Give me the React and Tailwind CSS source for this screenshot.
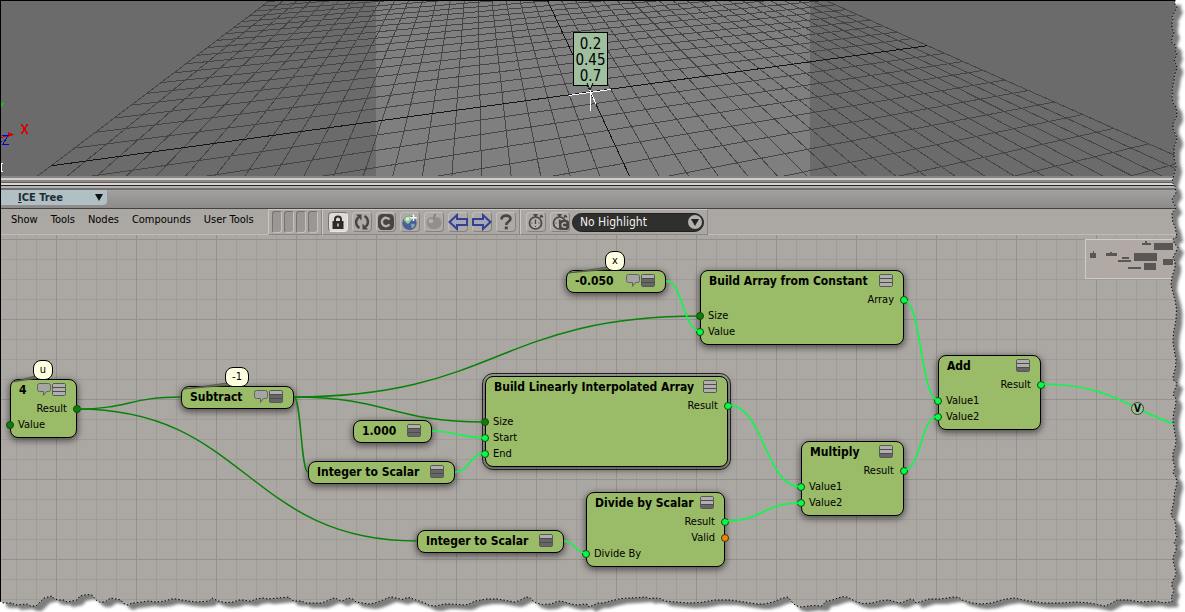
import React from "react";

const DARK = "#078207";
const LIGHT = "#00ff44";
const CANVAS_TOP = 235;

/* ---------- 3D viewport ---------- */

const HORIZON = -155;
const VANISH_Z = 475;
const VANISH_X = 2392;
const BASE = 175;

const zFoot = (u) => 629 + 29.5 * u;
const xFoot = (v) => -16 + 115 * v;

// Where the grid line v (parallel to X) meets the grid line u (parallel to Z).
function cross(u, v) {
  const a = (VANISH_Z - zFoot(u)) / (HORIZON - BASE);
  const b = (VANISH_X - xFoot(v)) / (HORIZON - BASE);
  const t = (xFoot(v) - zFoot(u)) / (a - b);
  return [zFoot(u) + a * t, BASE + t];
}

function Viewport() {
  const steps = Array.from({ length: 41 }, (_, i) => i - 20);
  const zLine = (u) => {
    const a = (VANISH_Z - zFoot(u)) / (HORIZON - BASE);
    return `M${zFoot(u) + a * 2} ${BASE + 2}L${zFoot(u) - a * 175} 0`;
  };
  const xLine = (v) => {
    const l = cross(-20, v);
    const r = cross(20, v);
    return `M${l[0]} ${l[1]}L${r[0]} ${r[1]}`;
  };
  return (
    <section className="relative h-44 shrink-0 overflow-hidden bg-[#6b6b6b]">
      <svg className="absolute inset-0 h-full w-full" shapeRendering="crispEdges" fill="none">
        <rect x="376" y="0" width="434" height="176" fill="#7f7f7f" />
        <g stroke="#454545">
          {steps.filter((s) => s !== 0).map((s) => (
            <path key={s} d={zLine(s) + xLine(s)} />
          ))}
        </g>
        <path d={zLine(0) + xLine(0)} stroke="#141414" />
        <path d="M569 95.500L611 89.500M590.500 92V111M588 86L596 104" stroke="#fff" />
        <path d="M0 138L10 134.500" stroke="#d80000" />
        <path d="M8 132L14 134.500L8 137Z" fill="#d80000" />
        <path d="M21.500 124L27.500 134M27.500 124L21.500 134" stroke="#d80000" strokeWidth="1.700" />
        <path d="M2 135.500H8L2.500 144.500H9M0 141H2" stroke="#0000d8" />
        <path d="M0 108L3 103" stroke="#00d800" strokeWidth="2" />
        <path d="M0 163.500H3M1.500 163V171M0 171.500H3" stroke="#fff" />
      </svg>
      <div className="absolute left-[573px] top-8 flex w-[35px] flex-col items-center border border-black bg-[#9fbf9f] pb-[1px] pt-[3px] text-[15px] leading-4 text-black">
        <span>0.2</span>
        <span>0.45</span>
        <span>0.7</span>
      </div>
      <svg className="absolute left-[586px] top-[83px] h-2 w-2" viewBox="0 0 8 8">
        <path d="M1 0L4 7L7 0" fill="#9fbf9f" stroke="#000" />
      </svg>
    </section>
  );
}

/* ---------- toolbar ---------- */

function Tool({ label, active, children }) {
  return (
    <button
      aria-label={label}
      className={
        active
          ? "flex size-5 items-center justify-center rounded border border-[#77736f] border-r-[#e8e6e4] border-b-[#e8e6e4] bg-[#dedbd9]"
          : "flex size-5 items-center justify-center rounded border border-[#c2bebb] border-r-[#86827f] border-b-[#86827f] bg-[#aeaaa7]"
      }
    >
      <svg viewBox="0 0 18 18" className="size-[18px] shrink-0 overflow-visible" fill="none">
        {children}
      </svg>
    </button>
  );
}

function Stopwatch() {
  return (
    <g stroke="#474441">
      <circle cx="8.500" cy="10" r="6" strokeWidth="1.700" fill="#b3afac" />
      <path d="M6.500 1.800H10.500M8.500 2V4M13 4.500L15 2.500M13.500 2L15.800 4.200" strokeWidth="1.700" />
      <path d="M8.500 6.500V11" strokeWidth="1.300" />
      <path d="M4.500 10H5.500M11.500 10H12.500M8.500 13V14" />
    </g>
  );
}

function Toolbar() {
  const group =
    "flex h-[26px] items-center border border-[#8b8784] border-l-[#cac7c4] border-t-[#cac7c4]";
  return (
    <div className="flex">
      <div className={group + " w-[54px] gap-[2px] px-[3px]"}>
        {[0, 1, 2, 3].map((i) => (
          <span
            key={i}
            className="h-[22px] w-[10px] rounded-[3px] border border-[#75726f] border-b-[#c4c1be] border-r-[#c4c1be] bg-[#9b9794]"
          />
        ))}
      </div>
      <div className={group + " w-[198px] gap-1 pl-[5px]"}>
        <Tool label="Lock" active>
          <path d="M6 9V6.500A3 3 0 0 1 12 6.500V9" stroke="#2e2a28" strokeWidth="2" />
          <rect x="3.500" y="8" width="11" height="8" fill="#2e2a28" />
          <path d="M9 10.500V13.500" stroke="#dedbd9" strokeWidth="1.500" />
        </Tool>
        <Tool label="Refresh">
          <path d="M6.500 15A6.500 6.500 0 0 1 5.500 4.200" stroke="#474441" strokeWidth="2.400" />
          <path d="M3 1.500H8.500V7.500Z" fill="#474441" />
          <path d="M11.500 3A6.500 6.500 0 0 1 12.500 13.800" stroke="#474441" strokeWidth="2.400" />
          <path d="M15 16.500H9.500V10.500Z" fill="#474441" />
        </Tool>
        <Tool label="Compile">
          <rect x="1" y="1" width="16" height="16" rx="4.500" fill="#474441" />
          <path d="M12.500 6.600A4.200 4.200 0 1 0 12.500 11.400" stroke="#b5b1ae" strokeWidth="2.400" />
        </Tool>
        <Tool label="New world">
          <circle cx="8.500" cy="10" r="7.200" fill="#4c5e9c" />
          <path d="M3 6Q5 2.500 9 3Q12 4 11 7Q9 8 8.500 10Q6 12 4.500 9Q2.500 8 3 6Z" fill="#92c792" />
          <path d="M10 11Q13 10 14 12Q13 15 10.500 15Z" fill="#7cae96" />
          <circle cx="6.500" cy="6" r="2" fill="#d4edd4" />
          <path d="M12.500 1.500V8M9.300 4.700H15.700" stroke="#fff" strokeWidth="1.500" />
        </Tool>
        <Tool label="Apple">
          <path d="M9 5C5 3 1.500 5.500 1.500 9.500C1.500 13.500 5 16.500 9 16C13 16.500 16.500 13.500 16.500 9.500C16.500 5.500 13 3 9 5Z" fill="#92908e" />
          <ellipse cx="6" cy="8" rx="2.500" ry="2" fill="#b4b1ae" />
          <path d="M9 6Q8.500 3 10.500 1" stroke="#777472" strokeWidth="1.300" />
        </Tool>
        <Tool label="Back">
          <path d="M0.500 9L8 2V6H18V12H8V16Z" stroke="#334190" strokeWidth="2" fill="#a5a8bb" />
        </Tool>
        <Tool label="Forward">
          <path d="M17.500 9L10 2V6H0V12H10V16Z" stroke="#334190" strokeWidth="2" fill="#a5a8bb" />
        </Tool>
        <Tool label="Help">
          <path d="M4.500 6.500C4.500 1.500 13.500 1.500 13.500 5.800C13.500 8.500 9.300 8.500 9.300 12" stroke="#474441" strokeWidth="2.600" />
          <rect x="7.800" y="13.500" width="3" height="2.800" fill="#474441" />
        </Tool>
      </div>
      <div className={group + " w-[188px] gap-1 pl-[5px] pr-[3px]"}>
        <Tool label="Timer">
          <Stopwatch />
        </Tool>
        <Tool label="Compiled timer">
          <Stopwatch />
          <rect x="8" y="7" width="10" height="10" rx="3" fill="#474441" />
          <path d="M15 10.600A2.200 2.200 0 1 0 15 13.400" stroke="#b5b1ae" strokeWidth="1.500" />
        </Tool>
        <label className="relative -ml-[2px] block flex-1">
          <select
            aria-label="Highlight"
            className="block h-[19px] w-full appearance-none rounded-full border border-[#1f1f1f] bg-[#2f2f2e] pl-[7px] pr-5 text-xs leading-4 text-[#f0f0f0]"
          >
            <option>No Highlight</option>
          </select>
          <svg viewBox="0 0 16 16" className="pointer-events-none absolute right-[1px] top-[1px] size-4">
            <circle cx="8" cy="8" r="7" fill="#b4b1af" />
            <path d="M4 5H12L8 12Z" fill="#222" />
          </svg>
        </label>
      </div>
    </div>
  );
}

/* ---------- node graph ---------- */

// shade: how many of the three bands, from the bottom, are dark
function BandIcon({ shade }) {
  const fills = [0, 1, 2].map((i) => (i >= 3 - shade ? "#666666" : "#b0afae"));
  return (
    <svg viewBox="0 0 14 13" className="h-[13px] w-[14px] shrink-0">
      <rect x="0.500" y="0.500" width="13" height="12" rx="1.500" fill={fills[1]} stroke="#585858" />
      <rect x="1" y="1" width="12" height="3" fill={fills[0]} />
      <rect x="1" y="9" width="12" height="3" fill={fills[2]} />
      <path d="M1 4.500H13M1 8.500H13" stroke="#4c4c4c" />
    </svg>
  );
}

function SpeechIcon() {
  return (
    <svg viewBox="0 0 14 13" className="h-[13px] w-[14px] shrink-0">
      <path
        d="M2.500 0.500H11.500Q13.500 0.500 13.500 2.500V6.500Q13.500 8.500 11.500 8.500H9.500L6.500 12.300V8.500H2.500Q0.500 8.500 0.500 6.500V2.500Q0.500 0.500 2.500 0.500Z"
        fill="#a5a5a4"
        stroke="#626262"
      />
    </svg>
  );
}

const NODES = [
  { x: 10, y: 379, w: 67, title: "4", shade: 0, note: { text: "u", x: 23 }, out: [["Result", DARK]], in: [["Value", DARK]] },
  { x: 181, y: 386, w: 113, title: "Subtract", shade: 2, note: { text: "-1", x: 44 } },
  { x: 566, y: 270, w: 100, title: "-0.050", shade: 2, note: { text: "x", x: 39 } },
  { x: 700, y: 270, w: 204, title: "Build Array from Constant", shade: 0, out: [["Array", LIGHT]], in: [["Size", DARK], ["Value", LIGHT]] },
  { x: 485, y: 376, w: 243, title: "Build Linearly Interpolated Array", shade: 0, selected: true, out: [["Result", LIGHT]], in: [["Size", DARK], ["Start", LIGHT], ["End", LIGHT]] },
  { x: 353, y: 420, w: 79, title: "1.000", shade: 2 },
  { x: 308, y: 461, w: 147, title: "Integer to Scalar", shade: 2 },
  { x: 417, y: 530, w: 147, title: "Integer to Scalar", shade: 2 },
  { x: 586, y: 492, w: 139, title: "Divide by Scalar", shade: 1, out: [["Result", LIGHT], ["Valid", "#ff8000"]], in: [["Divide By", LIGHT]] },
  { x: 801, y: 441, w: 103, title: "Multiply", shade: 1, out: [["Result", LIGHT]], in: [["Value1", LIGHT], ["Value2", LIGHT]] },
  { x: 938, y: 355, w: 103, title: "Add", shade: 1, out: [["Result", LIGHT]], in: [["Value1", LIGHT], ["Value2", LIGHT]] },
];

function Port({ color, side }) {
  return (
    <i
      className={
        side === "left"
          ? "absolute -left-[5px] top-1 size-2 rounded-full border border-[#263d1a]"
          : "absolute -right-[5px] top-1 size-2 rounded-full border border-[#263d1a]"
      }
      style={{ backgroundColor: color }}
    />
  );
}

function Node({ node }) {
  const open = node.out || node.in;
  return (
    <article
      className={
        "absolute rounded-lg border border-black bg-[#9abb67] shadow-[0_2px_6px_1px_rgba(0,0,0,0.5)]" +
        (open ? " pb-1" : "") +
        (node.selected ? " outline outline-offset-2 outline-[#222]" : "")
      }
      style={{ left: node.x, top: node.y - CANVAS_TOP, width: node.w }}
    >
      {node.note && (
        <>
          <svg className="absolute -top-3 left-0 h-4 w-12 overflow-visible" fill="none">
            <path d={`M1 14L${node.note.x + 1} 8L${node.note.x + 6} 10Z`} fill="#6d7a55" stroke="#484848" strokeWidth="0.700" />
          </svg>
          <span
            className={
              "absolute -top-5 flex h-5 items-center justify-center rounded-lg border border-black bg-[#ffffe1] text-[11px] leading-4 " +
              (node.note.text === "-1" ? "w-6" : "w-5")
            }
            style={{ left: node.note.x - 1 }}
          >
            {node.note.text}
          </span>
        </>
      )}
      <header className="flex h-[21px] items-start justify-between pl-2 pr-[10px] pt-[3px]">
        <h3 className="whitespace-nowrap text-xs font-bold leading-[14px]">{node.title}</h3>
        <span className="flex gap-[1px]">
          {node.note && <SpeechIcon />}
          <BandIcon shade={node.shade} />
        </span>
      </header>
      {open && (
        <ul className="text-[11px] leading-4">
          {(node.out || []).map(([name, color]) => (
            <li key={name} className="relative h-4 pr-[9px] text-right">
              {name}
              <Port color={color} side="right" />
            </li>
          ))}
          {(node.in || []).map(([name, color]) => (
            <li key={name} className="relative h-4 pl-[7px]">
              {name}
              <Port color={color} side="left" />
            </li>
          ))}
        </ul>
      )}
    </article>
  );
}

const WIRES = [
  [77, 409, 181, 397, DARK],
  [77, 409, 417, 541, DARK],
  [294, 397, 700, 316, DARK],
  [294, 397, 485, 422, DARK],
  [294, 397, 308, 472, DARK],
  [666, 281, 700, 331, LIGHT],
  [432, 431, 485, 438, LIGHT],
  [455, 472, 485, 453, LIGHT],
  [728, 405, 801, 487, LIGHT],
  [725, 521, 801, 503, LIGHT],
  [564, 541, 586, 553, LIGHT],
  [904, 300, 938, 400, LIGHT],
  [904, 470, 938, 416, LIGHT],
  [1041, 384, 1233, 432, LIGHT],
];

function Wires() {
  return (
    <svg className="absolute inset-0 h-full w-full" fill="none" strokeWidth="1.500">
      {WIRES.map(([x1, y1, x2, y2, color], i) => {
        const m = (x1 + x2) / 2;
        const a = y1 - CANVAS_TOP;
        const b = y2 - CANVAS_TOP;
        return <path key={i} d={`M${x1} ${a}C${m} ${a} ${m} ${b} ${x2} ${b}`} stroke={color} />;
      })}
    </svg>
  );
}

const MINI = [
  [5, 14, 6, 5], [8, 12, 1, 2], [21, 14, 11, 3], [25, 13, 2, 1], [37, 18, 7, 2], [33, 21, 13, 2],
  [43, 28, 13, 2], [59, 24, 12, 7], [49, 14, 23, 8], [57, 4, 9, 2], [60, 2, 2, 2], [69, 4, 19, 7], [78, 20, 10, 6],
];

function MiniMap() {
  return (
    <svg className="absolute right-0 top-1 h-10 w-[100px]" shapeRendering="crispEdges">
      <rect x="0.500" y="0.500" width="110" height="39" fill="#b1a9a4" stroke="#cfccca" />
      {MINI.map(([x, y, w, h], i) => (
        <rect key={i} x={x} y={y} width={w} height={h} fill="#595755" />
      ))}
    </svg>
  );
}

/* ---------- torn paper border ---------- */

const RIGHT = [
  [1175, 0], [1177, 7], [1172, 17], [1172, 23], [1174, 32], [1171, 42], [1176, 48], [1177, 53], [1174, 62], [1177, 68],
  [1174, 80], [1172, 90], [1172, 97], [1176, 107], [1177, 115], [1173, 123], [1175, 133], [1177, 138], [1174, 147],
  [1176, 167], [1172, 182], [1176, 193], [1172, 200], [1176, 208], [1172, 213], [1175, 227], [1177, 237], [1173, 239],
  [1178, 247], [1173, 258], [1175, 267], [1171, 285], [1175, 300], [1176, 320], [1173, 343], [1176, 360], [1173, 377],
  [1177, 383], [1173, 395], [1176, 403], [1173, 422], [1176, 440], [1173, 453], [1175, 467], [1173, 473], [1177, 483],
  [1174, 500], [1171, 515], [1176, 527], [1177, 537], [1174, 543], [1176, 550], [1173, 560], [1176, 573], [1172, 582],
  [1174, 590], [1171, 598], [1172, 602],
];
const BOTTOM = [
  [1155, 601], [1140, 602], [1117, 600], [1105, 606], [1090, 603], [1060, 603], [1029, 601], [1014, 598], [991, 603],
  [973, 603], [962, 600], [954, 597], [929, 599], [916, 603], [910, 599], [899, 603], [889, 600], [872, 603], [857, 602],
  [847, 597], [838, 598], [826, 601], [822, 606], [801, 607], [792, 602], [788, 597], [773, 602], [757, 604], [744, 602],
  [715, 600], [688, 603], [665, 601], [654, 598], [646, 597], [631, 598], [610, 601], [598, 603], [589, 607], [585, 604],
  [571, 604], [561, 601], [551, 604], [536, 603], [532, 600], [526, 597], [515, 602], [497, 599], [475, 601], [465, 605],
  [450, 604], [436, 606], [425, 603], [413, 599], [406, 598], [400, 599], [392, 597], [383, 600], [369, 604], [356, 602],
  [348, 598], [341, 601], [335, 598], [327, 601], [318, 603], [306, 603], [295, 601], [289, 597], [268, 599], [256, 599],
  [249, 601], [243, 600], [233, 602], [218, 601], [212, 598], [209, 601], [188, 601], [176, 599], [165, 601], [149, 601],
  [134, 603], [128, 605], [121, 600], [111, 598], [105, 602], [96, 600], [92, 595], [80, 596], [77, 600], [67, 602],
  [59, 600], [52, 596], [44, 598], [36, 606], [27, 604], [15, 605], [8, 603], [0, 601],
];

// Adds a small ragged tooth between every pair of outline points.
function ragged(points) {
  return points
    .map(([x, y], i) => {
      const n = points[i + 1];
      if (!n) return `${x} ${y}`;
      const j = ((i * 7) % 3) - 1;
      return `${x} ${y}L${(x + n[0]) / 2 + j} ${(y + n[1]) / 2 - j}`;
    })
    .join("L");
}

function TornBorder() {
  const edge = "M" + ragged([...RIGHT, ...BOTTOM]);
  const outside = edge + "L0 612L1185 612L1185 0Z";
  return (
    <svg
      className="pointer-events-none absolute inset-0 h-full w-full"
      viewBox="0 0 1185 612"
      preserveAspectRatio="none"
      fill="none"
    >
      <defs>
        <clipPath id="outside">
          <path d={outside} />
        </clipPath>
        <filter id="soften" x="-5%" y="-5%" width="110%" height="110%">
          <feGaussianBlur stdDeviation="1.700" />
        </filter>
      </defs>
      <path d={outside} fill="#fff" />
      <g clipPath="url(#outside)">
        <path d={edge + "L0 0Z"} transform="translate(6 5)" fill="#7d7d7d" filter="url(#soften)" />
      </g>
      <path d={edge} stroke="#000" strokeDasharray="1.500 2" />
      <path d="M0.500 601V0.500H1175" stroke="#000" shapeRendering="crispEdges" />
    </svg>
  );
}

export default function App() {
  return (
    <main className="relative flex min-h-screen flex-col overflow-hidden bg-[#aba7a3] font-['DejaVu_Sans_Condensed','DejaVu_Sans',sans-serif] text-black">
      <Viewport />
      <div className="h-[14px] shrink-0 bg-[linear-gradient(#868583_0_2px,#d0cdca_2px_4px,#8c8784_4px_6px,#625c5a_6px_7px,#d8d6d4_7px_9px,#262626_9px_10px,#b4b2b0_10px_12px,#73716f_12px_14px)]" />
      <div className="flex h-[19px] shrink-0 items-start border-b border-[#454341] bg-[linear-gradient(#a3a19f,#8d8b89)]">
        <button className="flex h-[15px] w-[107px] items-center justify-between rounded-br bg-[#b1c0c4] pl-[18px] pr-1 text-[11px] font-bold leading-[14px] text-[#1f2d33]">
          <span>
            <span className="underline">I</span>CE Tree
          </span>
          <svg viewBox="0 0 8 7" className="h-[7px] w-2">
            <path d="M0 0H8L4 7Z" fill="#111" />
          </svg>
        </button>
      </div>
      <div className="flex h-[26px] shrink-0 border-b border-[#bfbbb8]">
        <nav className="flex h-[22px] w-[268px] shrink-0 items-center gap-[13px] pl-[11px] text-[11px] leading-4">
          {["Show", "Tools", "Nodes", "Compounds", "User Tools"].map((name) => (
            <button key={name} className="whitespace-nowrap">
              {name}
            </button>
          ))}
        </nav>
        <Toolbar />
      </div>
      <section className="relative min-h-[377px] flex-1 overflow-hidden bg-[linear-gradient(90deg,#94908d_1px,transparent_1px),linear-gradient(#94908d_1px,transparent_1px),linear-gradient(90deg,#a09c98_1px,transparent_1px),linear-gradient(#a09c98_1px,transparent_1px)] bg-[length:80px_80px,80px_80px,20px_20px,20px_20px] bg-[position:56px_4px]">
        {NODES.map((node) => (
          <Node key={`${node.x}-${node.y}`} node={node} />
        ))}
        <Wires />
        <span className="absolute left-[1131px] top-[167px] flex size-[13px] items-center justify-center rounded-full border border-[#2c4a2c] bg-[#9fbf9f] text-[10px] font-bold leading-3">
          V
        </span>
        <MiniMap />
      </section>
      <TornBorder />
    </main>
  );
}
